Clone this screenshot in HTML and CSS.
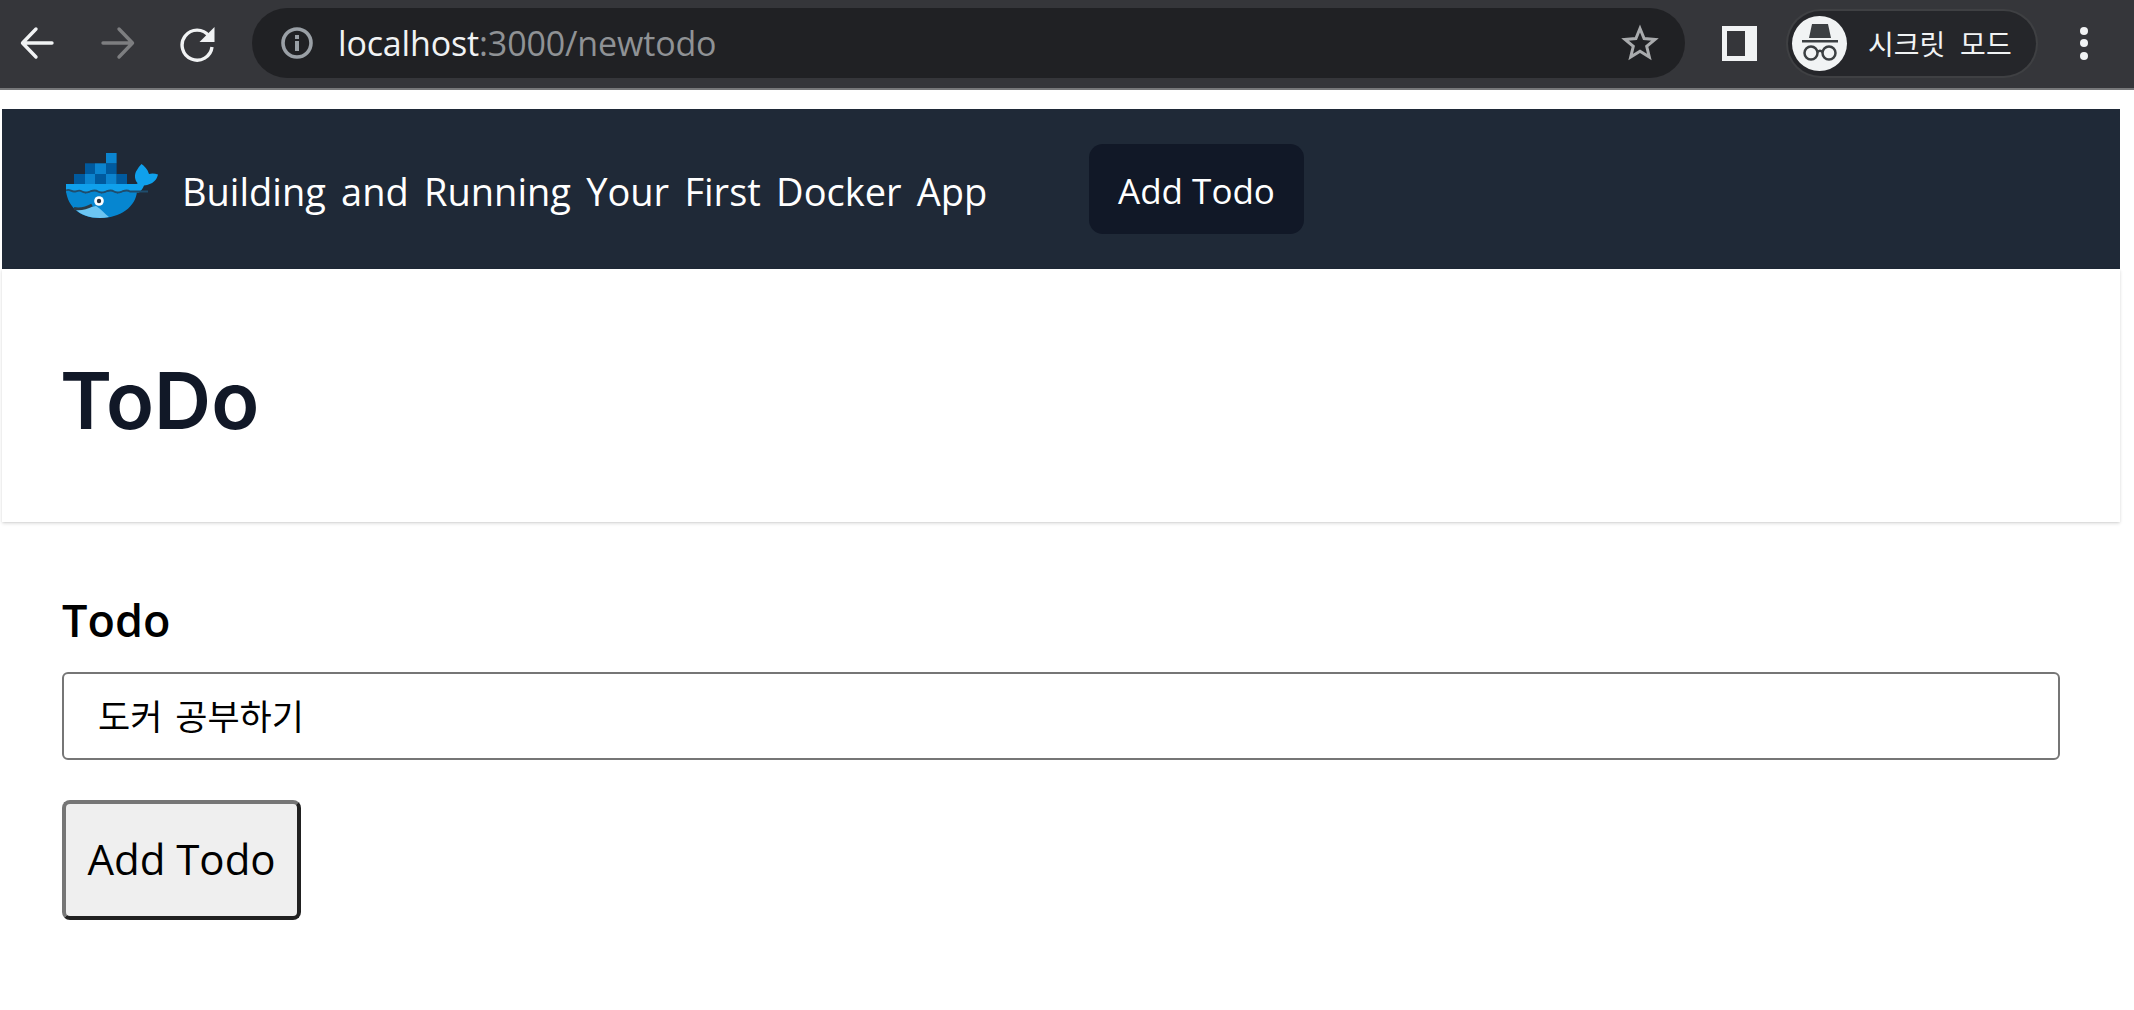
FILE: index.html
```html
<!DOCTYPE html>
<html lang="ko">
<head>
<meta charset="utf-8">
<title>ToDo</title>
<link rel="stylesheet" href="styles.css">
</head>
<body>
<div class="chrome">
  <svg class="ci back" width="36" height="36" viewBox="0 0 36 36"><path d="M33 18H5M17 4 3.500 18 17 32" fill="none" stroke="#f1f3f4" stroke-width="3.400" stroke-linecap="round" stroke-linejoin="round"/></svg>
  <svg class="ci fwd" width="36" height="36" viewBox="0 0 36 36"><path d="M3 18h28M19 4l13.500 14L19 32" fill="none" stroke="#7d7e80" stroke-width="3.400" stroke-linecap="round" stroke-linejoin="round"/></svg>
  <svg class="ci reload" width="38" height="38" viewBox="0 0 38 38"><path d="M30 12A15 15 0 1 0 33 23" fill="none" stroke="#f1f3f4" stroke-width="3.400"/><path d="M35.500 3v15h-15z" fill="#f1f3f4"/></svg>
  <div class="omnibox">
    <svg class="info" width="34" height="34" viewBox="0 0 34 34"><circle cx="17" cy="17" r="14" fill="none" stroke="#9aa0a6" stroke-width="3.600"/><path d="M15 15h4v10h-4zM15 9h4v4h-4z" fill="#9aa0a6"/></svg>
    <span class="url"><span class="host">localhost</span>:3000/newtodo</span>
    <svg class="star" width="38" height="38" viewBox="0 0 38 38"><path d="M19 4.500l4.100 10.100 10.900.8-8.300 7 2.600 10.600L19 27.200 9.700 33l2.600-10.600-8.300-7 10.900-.8z" fill="none" stroke="#a9abad" stroke-width="3"/></svg>
  </div>
  <div class="sidepanel"></div>
  <div class="profile">
    <span class="avatar">
      <svg width="46" height="46" viewBox="0 0 46 46"><path d="M15 4h16l3 14H12z" fill="#3c4043"/><path d="M5 20h36v2.500H5z" fill="#3c4043"/><g fill="none" stroke="#3c4043" stroke-width="2.500"><circle cx="14" cy="33" r="6.500"/><circle cx="32" cy="33" r="6.500"/><path d="M20.500 32c1.500-1.500 3.500-1.500 5 0"/></g></svg>
    </span>
    <span class="profile-label">시크릿 모드</span>
  </div>
  <div class="menu"><i></i><i></i><i></i></div>
</div>

<div class="page">
  <nav class="nav">
    <svg class="logo" width="92" height="65" viewBox="0 0 92 65">
      <g fill="#005a9e">
        <rect x="8" y="21" width="11" height="10"/><rect x="19" y="10.300" width="10" height="10.700"/><rect x="29" y="21" width="11" height="10"/><rect x="40" y="10.300" width="10.600" height="10.700"/><rect x="50.600" y="21" width="10.400" height="10"/>
      </g>
      <g fill="#0b84cf">
        <rect x="19" y="21" width="10" height="10"/><rect x="29" y="10.300" width="11" height="10.700"/><rect x="40" y="21" width="10.600" height="10"/><rect x="40" y="0" width="10.600" height="10.300"/>
      </g>
      <path d="M0 31h69c2 0 3-.5 2.500-1-3-3-3.500-9-.5-13 1-2 2.500-4 4.500-6 3 2 6 5 7.500 10 3-1 6-.5 9 .5-1 5-5 10-14 11-1 3-3 5-5 7H0z" fill="#0fa0ec"/>
      <path d="M0 38c3-2 5 1 8 1s5-2 8 0 5 1 8 0 5-2 8 0 5 1 8 0 5-2 8 0 5 1 8 0 5-2 8 0l7-1C70 54 54 65 34 65 14 65 2 54 0 38z" fill="#0686d0"/>
      <path d="M9 56c7 0 14-1 21-3 5 3 9 8 13 11-3 .7-6 1-9 1-10 0-19-3-25-9z" fill="#6cc5f2"/>
      <path d="M8 55.500c7 1 12 0 18-3.500" fill="none" stroke="#2b3b46" stroke-width="2.800"/>
      <path d="M0 37.500c3-2 5 1 8 1s5-2 8 0 5 1 8 0 5-2 8 0 5 1 8 0 5-2 8 0 5 1 8 0 5-2 8 0h18" fill="none" stroke="#1f4d6d" stroke-width="1.800"/>
      <circle cx="33" cy="48" r="4.800" fill="#fff"/><circle cx="33" cy="48" r="2.200" fill="#27333f"/>
    </svg>
    <span class="brand">Building and Running Your First Docker App</span>
    <a class="nav-btn">Add Todo</a>
  </nav>
  <header class="head"><h1>ToDo</h1></header>
  <form class="form">
    <label class="label" for="todo">Todo</label>
    <input id="todo" class="field" type="text" value="도커 공부하기">
    <button class="submit" type="button">Add Todo</button>
  </form>
</div>
</body>
</html>
```
FILE: styles.css
```css
* { box-sizing: border-box; }
html, body { margin: 0; height: 100%; background: #fff; overflow: hidden; }
body { font-family: "Open Sans", "Noto Sans CJK KR", sans-serif; }

.chrome {
  height: 90px;
  background: #35363a;
  border-bottom: 2px solid #77787a;
  display: flex;
  align-items: center;
  padding-bottom: 2px;
  color: #f1f3f4;
}
.ci { flex: none; }
.back { margin-left: 19px; }
.fwd { margin-left: 45px; }
.reload { margin-left: 43px; }
.omnibox {
  margin-left: 35px;
  width: 1433px;
  height: 70px;
  border-radius: 35px;
  background: #202124;
  display: flex;
  align-items: center;
  padding: 0 26px 0 28px;
}
.url {
  margin-left: 24px;
  font: 34px "Open Sans", sans-serif;
  letter-spacing: -0.15px;
  color: #8f9295;
  flex: 1;
}
.host { color: #f1f3f4; }
.sidepanel {
  flex: none;
  margin-left: 37px;
  width: 35px;
  height: 35px;
  background: #35363a;
  border: 5px solid #f1f3f4;
  border-right-width: 12px;
}
.profile {
  flex: none;
  margin-left: 31px;
  width: 248px;
  height: 65px;
  border-radius: 33px;
  background: #25262a;
  box-shadow: 0 0 0 2px #3f4043;
  display: flex;
  align-items: center;
  padding-left: 4px;
}
.avatar {
  width: 55px;
  height: 55px;
  border-radius: 50%;
  background: #f1f3f4;
  display: flex;
  align-items: center;
  justify-content: center;
}
.profile-label {
  margin-left: 21px;
  font: 28px "Noto Sans CJK KR", sans-serif;
  word-spacing: 7px;
  color: #f1f3f4;
}
.menu {
  flex: none;
  margin-left: 44px;
  display: flex;
  flex-direction: column;
  gap: 4.500px;
}
.menu i { width: 8px; height: 8px; border-radius: 50%; background: #f1f3f4; }

.page { padding: 19px 14px 0 2px; }
.nav {
  height: 160px;
  background: #1f2937;
  display: flex;
  align-items: center;
  padding-left: 64px;
  color: #fff;
}
.logo { flex: none; margin-top: -7px; }
.brand { margin-left: 24px; padding-top: 3px; font-size: 38px; word-spacing: 5.400px; white-space: nowrap; }
.nav-btn {
  margin-left: auto;
  margin-right: 816px;
  width: 215px;
  height: 90px;
  padding-top: 2px;
  border-radius: 14px;
  background: #111827;
  display: flex;
  align-items: center;
  justify-content: center;
  font-size: 35px;
}
.head {
  height: 253px;
  padding-left: 58px;
  display: flex;
  align-items: center;
  background: #fff;
  box-shadow: 0 1px 3px rgba(0,0,0,.1), 0 1px 2px -1px rgba(0,0,0,.1), 0 2px 4px rgba(0,0,0,.06);
}
h1 { margin: 0; font-family: Inter, sans-serif; font-size: 79px; font-weight: 600; line-height: 1; padding-top: 9px; color: #111827; }
.form { padding: 68px 0 0 60px; display: flex; flex-direction: column; align-items: flex-start; }
.label { font-size: 45px; font-weight: 600; color: #000; line-height: 60px; }
.field {
  margin-top: 22px;
  width: 1998px;
  height: 88px;
  border: 2px solid #767676;
  border-radius: 6px;
  padding: 0 34px 4px;
  font: 35px "Noto Sans CJK KR", sans-serif;
  word-spacing: 3px;
  color: #000;
  background: #fff;
  outline: none;
}
.submit {
  margin-top: 40px;
  width: 239px;
  height: 120px;
  border: 4px solid;
  border-color: #767676 #212121 #212121 #767676;
  border-radius: 8px;
  background: #efefef;
  font: 42px "Open Sans", sans-serif;
  color: #000;
  padding: 0 0 4px;
}
```
